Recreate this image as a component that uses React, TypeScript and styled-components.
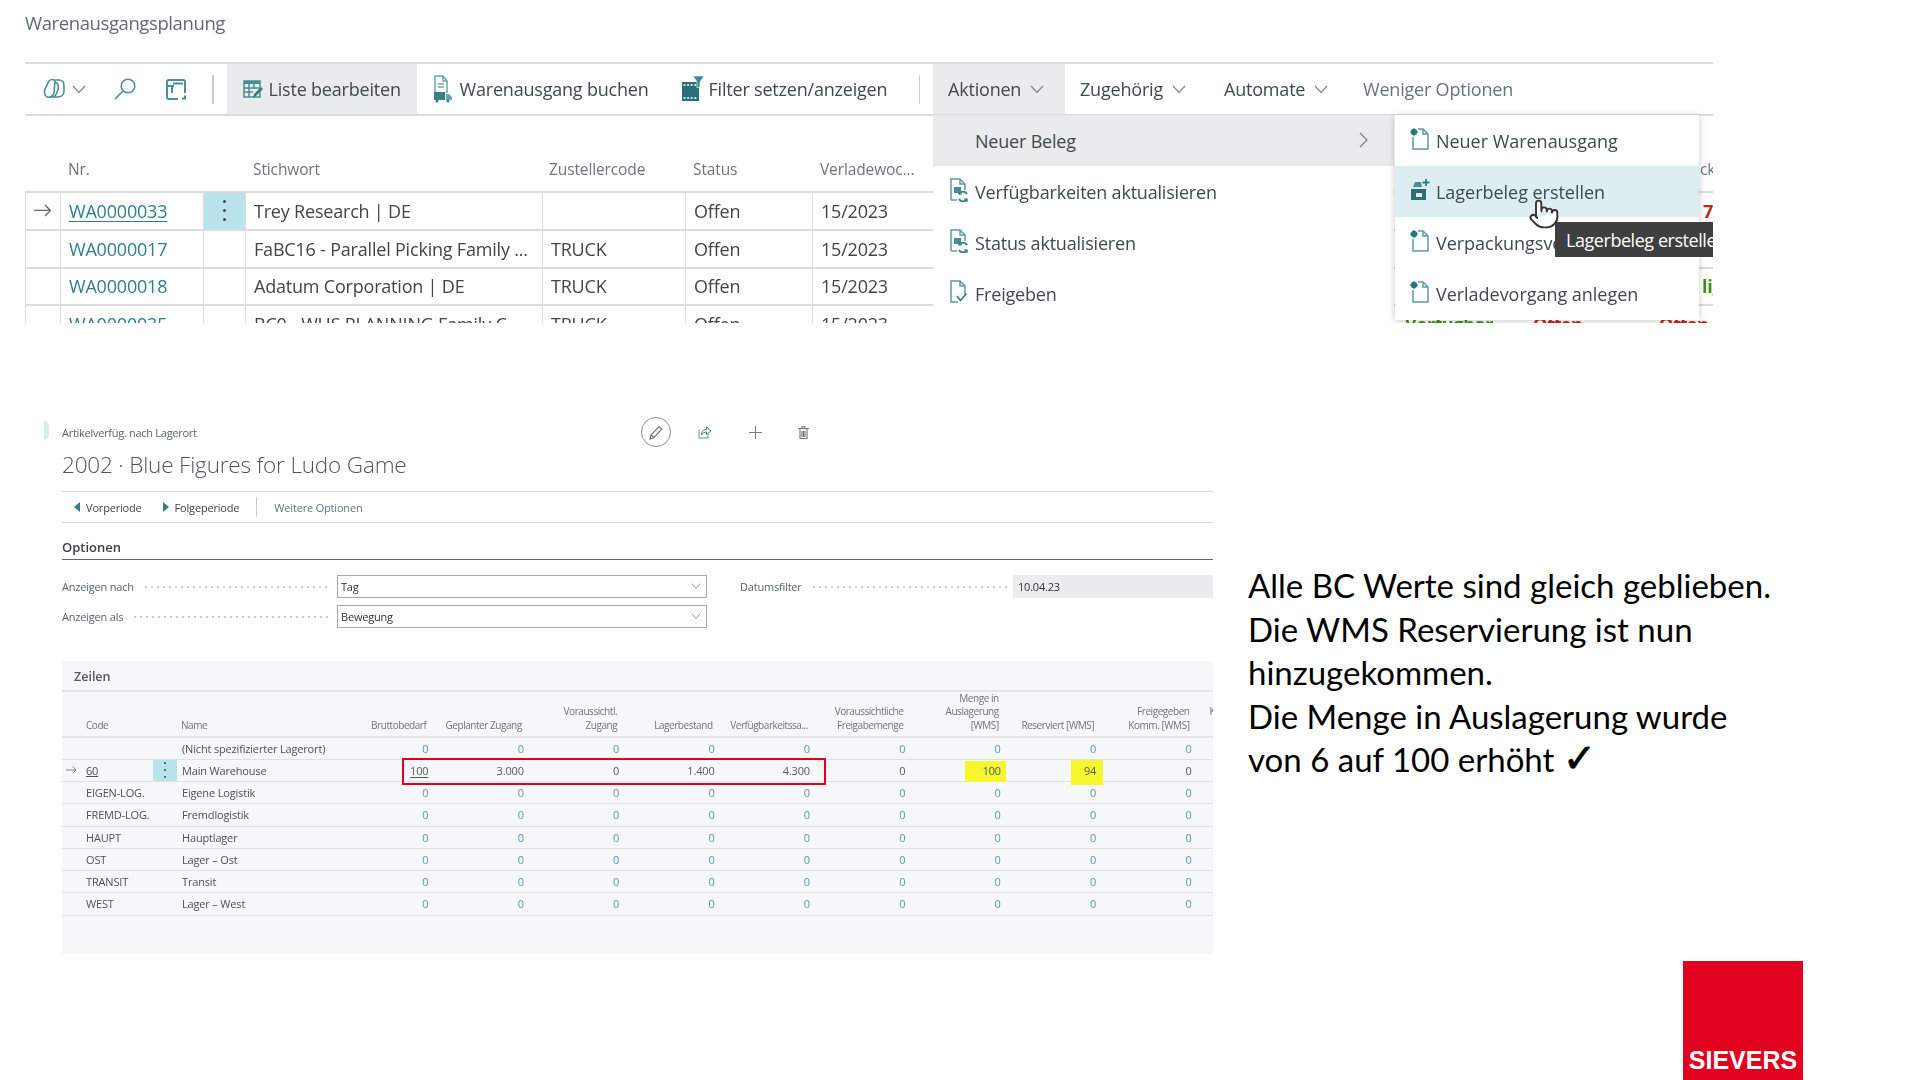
import React from 'react';
import styled, { createGlobalStyle } from 'styled-components';
import { Pointer } from 'lucide-react';

const TEAL = '#2f7f86';
const UI = '"Open Sans", "Noto Sans", sans-serif';

const Global = createGlobalStyle`
  html, body { margin: 0; padding: 0; background: #fff; }
  * { box-sizing: border-box; }
`;

const Slide = styled.div`
  width: 1920px; height: 1080px; overflow: hidden; background: #fff;
  font-family: ${UI}; color: #444;
`;

/* ---------- top screenshot ---------- */
const TopShot = styled.section`
  position: relative; margin-left: 25px; width: 1688px; height: 323px; overflow: hidden;
  filter: blur(0.35px);
`;
const PageTitle = styled.h1`
  margin: 0; height: 62px; padding-top: 9px; font-size: 18.5px; line-height: 28px; font-weight: 400;
  color: #5f6b70; letter-spacing: -0.4px;
`;
const Toolbar = styled.div`
  display: flex; height: 54px; border-top: 2px solid #dcdcdf; border-bottom: 2px solid #dcdcdf;
`;
const IconCluster = styled.div`
  width: 187px; padding-left: 18px; display: flex; align-items: center; color: ${TEAL};
  svg { flex: none; }
`;
const Gap = styled.span<{ $w: number }>`
  flex: none; width: ${p => p.$w}px;
`;
const ToolSep = styled.div<{ $l?: number; $r?: number }>`
  flex: none; width: 1.5px; height: 29px; align-self: center; background: #c9cbce;
  margin-left: ${p => p.$l ?? 0}px; margin-right: ${p => p.$r ?? 0}px;
`;
const ToolButton = styled.div<{ $w: number; $on?: boolean; $g?: number; $muted?: boolean }>`
  flex: none; width: ${p => p.$w}px; padding-left: 16px; display: flex; align-items: center;
  gap: ${p => p.$g ?? 6}px; font-size: 18px; letter-spacing: -0.2px; white-space: nowrap;
  color: ${p => (p.$muted ? '#66757a' : '#3f4a4e')};
  background: ${p => (p.$on ? '#eaebec' : 'transparent')};
`;
const MenuButton = styled(ToolButton)`
  padding-left: 15px; gap: 9px;
`;

const TopTable = styled.div``;
const topCols = '35px 143px 42px 297px 143px 127px 121px 471px 128px 126px 55px';
const TopHead = styled.div`
  display: grid; grid-template-columns: ${topCols}; height: 77px; align-items: end;
  border-bottom: 2px solid #dcdcdf; padding-bottom: 10px; font-size: 15.5px; color: #6b767a;
  letter-spacing: -0.12px;
`;
const HeadCell = styled.div<{ $pad?: number }>`
  padding-left: ${p => p.$pad ?? 8}px; white-space: nowrap; overflow: hidden; line-height: 24px;
`;
const TopRow = styled.div`
  display: grid; grid-template-columns: ${topCols}; height: 38px;
  border-bottom: 2px solid #dcdcdf; border-left: 1.5px solid #dcdcdf; margin-top: -0.2px;
  font-size: 18px; letter-spacing: -0.2px; color: #444;
`;
const TopCell = styled.div<{ $pad?: number; $active?: boolean; $plain?: boolean; $color?: string; $bold?: boolean }>`
  display: flex; align-items: center; padding-left: ${p => p.$pad ?? 8}px; white-space: nowrap; overflow: hidden;
  border-right: ${p => (p.$plain ? 'none' : '1.5px solid #dcdcdf')};
  background: ${p => (p.$active ? '#b9e4ec' : 'transparent')};
  color: ${p => p.$color ?? 'inherit'}; font-weight: ${p => (p.$bold ? 700 : 400)};
`;
const RowLink = styled.a<{ $current?: boolean }>`
  color: ${TEAL}; text-decoration: ${p => (p.$current ? 'underline' : 'none')}; text-underline-offset: 3px;
`;
const Dots = styled.span<{ $size?: number }>`
  display: flex; flex-direction: column; align-items: center; gap: ${p => (p.$size ?? 3) + 3}px; width: 100%;
  i { display: block; width: ${p => p.$size ?? 3}px; height: ${p => p.$size ?? 3}px; border-radius: 50%; background: #445; }
`;

const DropMenu = styled.div`
  position: absolute; left: 908px; top: 115px; width: 461px; height: 208px; background: #fff;
`;
const SubMenu = styled.div`
  position: absolute; left: 1370px; top: 115px; width: 304px; height: 205px; background: #fff;
  box-shadow: 0 1px 7px rgba(0, 0, 0, 0.22);
`;
const MenuRow = styled.div<{ $tone?: string }>`
  position: relative; height: 51px; display: flex; align-items: center; padding-left: 16px; gap: 6px;
  background: ${p => p.$tone ?? 'transparent'}; font-size: 18px; letter-spacing: -0.2px; color: #3f4a4e; white-space: nowrap;
`;
const SubRow = styled(MenuRow)`
  padding-left: 15px; letter-spacing: -0.03px;
`;
const MenuIconSlot = styled.span`
  flex: none; width: 20px; height: 24px; display: flex; align-items: center; justify-content: center; margin-top: -3px;
`;
const SubChevron = styled.span`
  position: absolute; right: 24px; top: 14px; height: 22px; color: #777;
`;
const Tooltip = styled.div`
  position: absolute; left: 1530px; top: 222px; width: 190px; height: 35px; background: #3f3f3f; color: #fff;
  padding-left: 11px; display: flex; align-items: center; font-size: 18px; letter-spacing: -0.45px; white-space: nowrap;
`;
const Hand = styled.span`
  position: absolute; left: 1503px; top: 198px; width: 32px; height: 36px; color: #333;
  svg { fill: #fff; }
`;

/* ---------- lower area ---------- */
const LowerRow = styled.div`
  display: flex; margin-top: 94px; height: 536px; margin-left: 44px;
`;
const Sliver = styled.div`
  flex: none; width: 5px; height: 19px; margin-top: 4px; margin-right: 13px;
  border-radius: 0 6px 6px 0; background: #d6eef2;
`;
const Card = styled.section`
  flex: none; width: 1151px; filter: blur(0.3px);
`;
const CardTop = styled.div`
  display: flex; align-items: center; height: 30px;
`;
const Crumb = styled.div`
  flex: none; width: 579px; font-size: 11px; letter-spacing: -0.28px; color: #5b6468; padding-top: 1px;
`;
const CardIcons = styled.div`
  display: flex; align-items: center; color: #6d7478;
`;
const EditRing = styled.span`
  width: 30px; height: 30px; border-radius: 50%; border: 1.5px solid #8a8f93; display: flex; align-items: center; justify-content: center;
`;
const CardTitle = styled.h2`
  margin: 0; height: 44px; padding-top: 3px; font-size: 22.5px; line-height: 30px; font-weight: 300; color: #4f5659; letter-spacing: -0.17px;
`;
const CardBar = styled.div`
  display: flex; align-items: center; height: 32px; border-top: 1.5px solid #dcdcdf; border-bottom: 1.5px solid #dcdcdf;
  font-size: 11px; letter-spacing: -0.18px; color: #444;
`;
const BarBtn = styled.span<{ $l: number; $muted?: boolean }>`
  display: flex; align-items: center; gap: 6px; margin-left: ${p => p.$l}px; white-space: nowrap;
  color: ${p => (p.$muted ? '#66757a' : 'inherit')};
`;
const BarSep = styled.span`
  width: 1px; height: 20px; background: #c9cbce; margin-left: 17px;
`;
const Triangle = styled.i<{ $left?: boolean }>`
  display: block; width: 0; height: 0; border-top: 5px solid transparent; border-bottom: 5px solid transparent;
  ${p => (p.$left ? `border-right: 6px solid ${TEAL};` : `border-left: 6px solid ${TEAL};`)}
`;
const SectionHead = styled.h3`
  margin: 0; height: 37px; padding-top: 15px; font-size: 13px; line-height: 18px; font-weight: 600; color: #3b4245;
  border-bottom: 1.5px solid #5a6670; letter-spacing: 0;
`;
const FieldGrid = styled.div`
  display: grid; grid-template-columns: 645px 33px 273px 200px; grid-auto-rows: 23px; row-gap: 7px; margin-top: 15px;
  font-size: 11px; letter-spacing: -0.2px;
`;
const LabelInput = styled.div`
  display: flex; grid-column: 1; height: 23px;
`;
const FieldName = styled.div<{ $w: number; $col?: number }>`
  grid-column: ${p => p.$col ?? 'auto'}; flex: none; width: ${p => p.$w}px; padding-right: 6px; display: flex; align-items: center; gap: 9px; color: #59636a; white-space: nowrap;
`;
const Leader = styled.span`
  flex: 1; height: 2px;
  background-image: radial-gradient(circle, #c4c8cb 0.7px, transparent 0.9px);
  background-size: 6px 2px; background-repeat: repeat-x;
`;
const SelectBox = styled.div`
  flex: none; width: 370px; height: 23px; border: 1.5px solid #a3a9af; padding: 0 5px 0 3px;
  display: flex; align-items: center; justify-content: space-between; color: #333;
`;
const ReadOnly = styled.div`
  grid-column: 4; background: #ebecee; display: flex; align-items: center; padding-left: 5px; color: #333;
`;

const Lines = styled.div`
  height: 293px; margin-top: 33px; background: #f6f7f9; position: relative; overflow: hidden;
`;
const LinesTitle = styled.div`
  height: 31px; border-bottom: 2px solid #e4e5e7; padding: 7px 0 0 12px; font-size: 12.5px; line-height: 18px; font-weight: 600; color: #50585c;
`;
const lineCols = '18px 73px 24px 161px repeat(9, 95.4px) 17px';
const LinesHead = styled.div`
  display: grid; grid-template-columns: ${lineCols}; height: 45.5px; align-items: end; border-bottom: 2px solid #e4e5e7;
  font-size: 10px; line-height: 13.4px; letter-spacing: -0.45px; color: #6c757a; padding-bottom: 6px;
`;
const LH = styled.div<{ $left?: boolean; $pad?: number }>`
  text-align: ${p => (p.$left ? 'left' : 'right')}; padding-right: ${p => (p.$left ? 0 : 7)}px; padding-left: ${p => p.$pad ?? 0}px; white-space: nowrap;
`;
const LRow = styled.div`
  position: relative; display: grid; grid-template-columns: ${lineCols}; height: 22.25px; border-bottom: 1.5px solid #dfe0e3;
  font-size: 11px; letter-spacing: -0.17px; align-items: center; color: #4b5256;
`;
const LCell = styled.div<{ $pad?: number }>`
  padding-left: ${p => p.$pad ?? 0}px; white-space: nowrap; display: flex; align-items: center; height: 100%;
`;
const ActionCell = styled(LCell)`
  background: #b9e4ec; justify-content: center;
`;
const Num = styled.div<{ $zero?: boolean; $link?: boolean }>`
  position: relative; text-align: right; padding-right: 5px; white-space: nowrap;
  color: ${p => (p.$zero ? '#5c9aa5' : '#555c60')};
  text-decoration: ${p => (p.$link ? 'underline' : 'none')}; text-underline-offset: 2px;
  span { position: relative; }
`;
const Mark = styled.i<{ $top: number; $h: number; $w: number; $right: number }>`
  position: absolute; background: #f5f62e;
  top: ${p => p.$top}px; height: ${p => p.$h}px; width: ${p => p.$w}px; right: ${p => p.$right}px;
`;
const RedBox = styled.div`
  position: absolute; left: 340px; top: -2px; width: 424px; height: 27px; border: 2px solid #e2001f; z-index: 2;
`;

const Note = styled.div`
  flex: none; margin: 147px 0 0 35px; font-family: Lato, "Open Sans", sans-serif; font-size: 33px; line-height: 43.6px; color: #000; white-space: nowrap;
`;
const NoteLine = styled.div``;
const CheckGlyph = styled.span`
  font-family: "DejaVu Sans", sans-serif; font-weight: 700; font-size: 40px; line-height: 0; -webkit-text-stroke: 0.8px #000;
`;

const Logo = styled.div`
  margin: 8px 0 0 1683px; width: 120px; height: 119px; background: #e2001f; color: #fff;
  display: flex; align-items: flex-end; justify-content: center; padding-bottom: 5px;
  font-family: "Liberation Sans", Arial, sans-serif; font-weight: 700; font-size: 25px; line-height: 30px; letter-spacing: 0;
`;

/* ---------- icons ---------- */
const Svg = styled.svg`
  flex: none; display: block;
`;
const Chevron = ({ c = '#7c8589', w = 14 }: { c?: string; w?: number }) => (
  <Svg width={w} height={w * 0.64} viewBox="0 0 14 9" fill="none" stroke={c} strokeWidth="1.2"><path d="M1 1l6 6.5L13 1" /></Svg>
);
const OfficeIcon = () => (
  <Svg width="22" height="24" viewBox="0 0 22 24" fill="none" stroke="#4a8e96" strokeWidth="1.6">
    <path d="M6 4c2-2 5-2 6 0l-1 12c-1 3-4 5-7 4-3-2-3-5-2-8z" />
    <path d="M12 3h4c4 0 5 3 5 6v5c0 4-3 6-6 6H7" />
    <path d="M12 5c3 1 4 4 3 8-1 3-2 5-4 7" />
  </Svg>
);
const SearchIcon = () => (
  <Svg width="22" height="22" viewBox="0 0 22 22" fill="none" stroke="#4a8e96" strokeWidth="1.6">
    <circle cx="14" cy="8" r="6.8" /><path d="M9 13L1 21" />
  </Svg>
);
const ColumnsIcon = () => (
  <Svg width="20" height="21" viewBox="0 0 20 21" fill="none" stroke="#4a8e96" strokeWidth="2">
    <path d="M19 14V3a2 2 0 0 0-2-2H3a2 2 0 0 0-2 2v15a2 2 0 0 0 2 2h9" />
    <path d="M1 7h7M6 7v7" />
    <rect x="7" y="3.5" width="10" height="2" fill="#4a8e96" stroke="none" />
    <path d="M6 17h.1M16 19.5h3v-3" />
  </Svg>
);
const ListEditIcon = () => (
  <Svg width="20" height="22" viewBox="0 0 20 22" fill="none" stroke="#4a8e96" strokeWidth="1.5">
    <rect x="1" y="3" width="16" height="16" />
    <path d="M1 4.5h16" strokeWidth="3" />
    <path d="M1 10h15M1 14h9M6 3v16M11 3v8" />
    <path d="M10 20l1-4 7-7 2 2-7 7z" fill={TEAL} stroke="none" />
  </Svg>
);
const PostIcon = () => (
  <Svg width="20" height="28" viewBox="0 0 20 28" fill="none" stroke="#6aa6ae" strokeWidth="1.5">
    <path d="M2 19V1h8l4 5v12" /><path d="M10 1v5h4M5 9h6M5 12h6" />
    <rect x="1" y="17" width="11" height="8" fill="#3a8089" stroke="none" />
    <path d="M13 19h3l3 3v3h-6z" fill="#6aa6ae" stroke="none" />
    <circle cx="4" cy="26" r="1.5" fill={TEAL} stroke="none" /><circle cx="15" cy="26" r="1.5" fill={TEAL} stroke="none" />
  </Svg>
);
const FilterIcon = () => (
  <Svg width="22" height="26" viewBox="0 0 22 26" fill="none">
    <rect x="0" y="6" width="17" height="19" fill="#2a6f78" />
    <path d="M1.5 9h14M1.5 22h14" stroke="#fff" strokeWidth="1.4" strokeDasharray="2 1.6" />
    <path d="M11 0h11l-4 6v5l-3 1V6z" fill="#3a8a93" stroke="#fff" strokeWidth=".6" />
  </Svg>
);
const DocRefreshIcon = () => (
  <Svg width="20" height="24" viewBox="0 0 20 24" fill="none" stroke="#5c9ba4" strokeWidth="1.5">
    <path d="M2 22V1h9l5 5v6" /><path d="M11 1v5h5M2 22h6" />
    <rect x="5" y="9" width="7" height="6" fill="#4a8e96" stroke="none" />
    <path d="M10 21a4.5 4.5 0 0 0 8 0M18 16a4.5 4.5 0 0 0-8 0" strokeWidth="1.7" stroke={TEAL} />
    <path d="M10 13v3h3M18 24v-3h-3" strokeWidth="1.2" stroke={TEAL} />
  </Svg>
);
const DocCheckIcon = () => (
  <Svg width="20" height="24" viewBox="0 0 20 24" fill="none" stroke="#5c9ba4" strokeWidth="1.5">
    <path d="M9 22H2V1h9l5 5v9" /><path d="M11 1v5h5" />
    <path d="M8 16l3.5 4.5 6-7" strokeWidth="1.6" stroke={TEAL} />
  </Svg>
);
const DocNewIcon = () => (
  <Svg width="20" height="22" viewBox="0 0 20 22" fill="none" stroke="#5c9ba4" strokeWidth="1.5">
    <path d="M3 9v12h15V6l-5-5H8" /><path d="M13 1v5h5" />
    <circle cx="4" cy="4" r="3.2" fill={TEAL} stroke="none" />
    <path d="M4 0v8M0 4h8" stroke="#2a6f78" strokeWidth="1" />
  </Svg>
);
const WarehouseDocIcon = () => (
  <Svg width="20" height="22" viewBox="0 0 20 22" fill="none">
    <path d="M1 10h15v11H1z" fill="#2a6f75" /><path d="M6 14h6v4H6z" fill="#dceef1" />
    <path d="M3 8l2-5h6l1 5z" fill="#4a8e96" /><path d="M16 0v7M12.5 3.5h7" stroke={TEAL} strokeWidth="1.8" />
  </Svg>
);
const PencilIcon = () => (
  <Svg width="15" height="15" viewBox="0 0 15 15" fill="none" stroke="#6d7478" strokeWidth="1.1">
    <path d="M1 14l1-4 8-8.5 3 2.5-8 8.5zM2 10l3 2.5" />
  </Svg>
);
const ShareIcon = () => (
  <Svg width="14" height="14" viewBox="0 0 14 14" fill="none" stroke={TEAL} strokeWidth="1">
    <path d="M1 5v8h9V9" opacity=".8" /><path d="M3.5 10c0-4 2.5-5.5 5-5.5V2L13 6 8.5 9.5V7C6.5 7 4.5 8 3.5 10z" />
  </Svg>
);
const PlusIcon = () => (
  <Svg width="13" height="13" viewBox="0 0 13 13" stroke="#757b7f" strokeWidth="1.1"><path d="M6.5 0v13M0 6.5h13" /></Svg>
);
const TrashIcon = () => (
  <Svg width="11" height="13" viewBox="0 0 11 13" fill="none" stroke="#6d7478" strokeWidth="1.1">
    <path d="M2 3v9.5h7V3M0 2.5h11M4 2.5V.7h3v1.8M4 5v6M5.5 5v6M7 5v6" />
  </Svg>
);
const ArrowIcon = ({ s = 18 }: { s?: number }) => (
  <Svg width={s} height={s * 0.72} viewBox="0 0 18 13" fill="none" stroke="#667" strokeWidth="1.3"><path d="M0 6.5h16.5M11 1l5.5 5.5L11 12" /></Svg>
);

/* ---------- data ---------- */
type TopRowData = { no: string; text: string; code: string; current?: boolean; extra?: React.ReactNode };
const topRows: TopRowData[] = [
  { no: 'WA0000033', text: 'Trey Research | DE', code: '', current: true,
    extra: <><TopCell $plain /><TopCell $plain /><TopCell $plain /><TopCell $plain $pad={44} $color="#c0281e" $bold>7</TopCell></> },
  { no: 'WA0000017', text: 'FaBC16 - Parallel Picking Family ...', code: 'TRUCK' },
  { no: 'WA0000018', text: 'Adatum Corporation | DE', code: 'TRUCK',
    extra: <><TopCell $plain /><TopCell $plain /><TopCell $plain /><TopCell $plain $pad={43} $color="#3f8f14" $bold>lig</TopCell></> },
  { no: 'WA0000035', text: 'BC0 - WHS PLANNING Family C...', code: 'TRUCK',
    extra: <><TopCell $plain /><TopCell $plain $pad={0} $color="#3f8f14" $bold>Verfügbar</TopCell><TopCell $plain $pad={0} $color="#c0281e" $bold>Offen</TopCell><TopCell $plain $pad={0} $color="#c0281e" $bold>Offen</TopCell></> },
];
const lowerRows = [
  { code: '', name: '(Nicht spezifizierter Lagerort)' },
  { code: '60', name: 'Main Warehouse', current: true },
  { code: 'EIGEN-LOG.', name: 'Eigene Logistik' },
  { code: 'FREMD-LOG.', name: 'Fremdlogistik' },
  { code: 'HAUPT', name: 'Hauptlager' },
  { code: 'OST', name: 'Lager – Ost' },
  { code: 'TRANSIT', name: 'Transit' },
  { code: 'WEST', name: 'Lager – West' },
];
const mainValues = ['100', '3.000', '0', '1.400', '4.300', '0', '100', '94', '0'];
const heads: React.ReactNode[] = [
  'Bruttobedarf', 'Geplanter Zugang', <>Voraussichtl.<br />Zugang</>, 'Lagerbestand', 'Verfügbarkeitssa...',
  <>Voraussichtliche<br />Freigabemenge</>, <>Menge in<br />Auslagerung<br />[WMS]</>, 'Reserviert [WMS]', <>Freigegeben<br />Komm. [WMS]</>,
];

export default function App() {
  return (
    <Slide>
      <Global />
      <TopShot>
        <PageTitle>Warenausgangsplanung</PageTitle>
        <Toolbar>
          <IconCluster>
            <OfficeIcon /><Gap $w={7} /><Chevron /><Gap $w={28} /><SearchIcon /><Gap $w={30} /><ColumnsIcon />
          </IconCluster>
          <ToolSep $r={13} />
          <ToolButton $w={190} $on><ListEditIcon />Liste bearbeiten</ToolButton>
          <ToolButton $w={249} $g={7}><PostIcon />Warenausgang buchen</ToolButton>
          <ToolButton $w={239} $g={5}><FilterIcon />Filter setzen/anzeigen</ToolButton>
          <ToolSep $l={14} $r={13} />
          <MenuButton $w={132} $on>Aktionen<Chevron /></MenuButton>
          <MenuButton $w={144}>Zugehörig<Chevron /></MenuButton>
          <MenuButton $w={139}>Automate<Chevron /></MenuButton>
          <MenuButton $w={190} $muted>Weniger Optionen</MenuButton>
        </Toolbar>
        <TopTable>
          <TopHead>
            <span />
            <HeadCell>Nr.</HeadCell>
            <span />
            <HeadCell>Stichwort</HeadCell>
            <HeadCell $pad={7}>Zustellercode</HeadCell>
            <HeadCell>Status</HeadCell>
            <HeadCell>Verladewoc...</HeadCell>
            <span /><span /><span />
            <HeadCell $pad={42}>ck</HeadCell>
          </TopHead>
          {topRows.map(r => (
            <TopRow key={r.no}>
              <TopCell $pad={8}>{r.current && <ArrowIcon />}</TopCell>
              <TopCell><RowLink $current={r.current}>{r.no}</RowLink></TopCell>
              <TopCell $pad={0} $active={r.current}>{r.current && <Dots><i /><i /><i /></Dots>}</TopCell>
              <TopCell>{r.text}</TopCell>
              <TopCell>{r.code}</TopCell>
              <TopCell>Offen</TopCell>
              <TopCell>15/2023</TopCell>
              {r.extra}
            </TopRow>
          ))}
        </TopTable>
        <DropMenu>
          <MenuRow $tone="#eaebec"><MenuIconSlot />Neuer Beleg
            <SubChevron><Svg width="12" height="22" viewBox="0 0 12 22" fill="none" stroke="#7c8589" strokeWidth="1.3"><path d="M2 4l7 7-7 7" /></Svg></SubChevron>
          </MenuRow>
          <MenuRow><MenuIconSlot><DocRefreshIcon /></MenuIconSlot>Verfügbarkeiten aktualisieren</MenuRow>
          <MenuRow><MenuIconSlot><DocRefreshIcon /></MenuIconSlot>Status aktualisieren</MenuRow>
          <MenuRow><MenuIconSlot><DocCheckIcon /></MenuIconSlot>Freigeben</MenuRow>
        </DropMenu>
        <SubMenu>
          <SubRow><MenuIconSlot><DocNewIcon /></MenuIconSlot>Neuer Warenausgang</SubRow>
          <SubRow $tone="#dceef1"><MenuIconSlot><WarehouseDocIcon /></MenuIconSlot>Lagerbeleg erstellen</SubRow>
          <SubRow><MenuIconSlot><DocNewIcon /></MenuIconSlot>Verpackungsvorgang</SubRow>
          <SubRow><MenuIconSlot><DocNewIcon /></MenuIconSlot>Verladevorgang anlegen</SubRow>
        </SubMenu>
        <Tooltip>Lagerbeleg erstellen</Tooltip>
        <Hand><Pointer size={32} strokeWidth={1.4} /></Hand>
      </TopShot>

      <LowerRow>
        <Sliver />
        <Card>
          <CardTop>
            <Crumb>Artikelverfüg. nach Lagerort</Crumb>
            <CardIcons>
              <EditRing><PencilIcon /></EditRing>
              <Gap $w={27} /><ShareIcon /><Gap $w={37} /><PlusIcon /><Gap $w={36} /><TrashIcon />
            </CardIcons>
          </CardTop>
          <CardTitle>2002 · Blue Figures for Ludo Game</CardTitle>
          <CardBar>
            <BarBtn $l={12}><Triangle $left />Vorperiode</BarBtn>
            <BarBtn $l={21}><Triangle />Folgeperiode</BarBtn>
            <BarSep />
            <BarBtn $l={17} $muted>Weitere Optionen</BarBtn>
          </CardBar>
          <SectionHead>Optionen</SectionHead>
          <FieldGrid>
            <LabelInput>
              <FieldName $w={275}>Anzeigen nach<Leader /></FieldName>
              <SelectBox>Tag<Chevron w={10} /></SelectBox>
            </LabelInput>
            <FieldName $w={273} $col={3}>Datumsfilter<Leader /></FieldName>
            <ReadOnly>10.04.23</ReadOnly>
            <LabelInput>
              <FieldName $w={275}>Anzeigen als<Leader /></FieldName>
              <SelectBox>Bewegung<Chevron w={10} /></SelectBox>
            </LabelInput>
          </FieldGrid>
          <Lines>
            <LinesTitle>Zeilen</LinesTitle>
            <LinesHead>
              <span />
              <LH $left $pad={6}>Code</LH>
              <span />
              <LH $left $pad={4}>Name</LH>
              {heads.map((h, i) => <LH key={i}>{h}</LH>)}
              <LH $left $pad={13}>K<br />&nbsp;</LH>
            </LinesHead>
            {lowerRows.map(r => (
              <LRow key={r.name}>
                <LCell $pad={4}>{r.current && <ArrowIcon s={11} />}</LCell>
                <LCell $pad={6}>{r.current ? <u>{r.code}</u> : r.code}</LCell>
                {r.current ? <ActionCell><Dots $size={2}><i /><i /><i /></Dots></ActionCell> : <LCell />}
                <LCell $pad={5}>{r.name}</LCell>
                {mainValues.map((v, i) =>
                  r.current ? (
                    <Num key={i} $link={i === 0}>
                      {i === 6 && <Mark $top={-2} $h={21} $w={41} $right={0} />}
                      {i === 7 && <Mark $top={-3} $h={25} $w={32} $right={-2} />}
                      <span>{v}</span>
                    </Num>
                  ) : <Num key={i} $zero><span>0</span></Num>
                )}
                <span />
                {r.current && <RedBox />}
              </LRow>
            ))}
          </Lines>
        </Card>
        <Note>
          <NoteLine>Alle BC Werte sind gleich geblieben.</NoteLine>
          <NoteLine>Die WMS Reservierung ist nun</NoteLine>
          <NoteLine>hinzugekommen.</NoteLine>
          <NoteLine>Die Menge in Auslagerung wurde</NoteLine>
          <NoteLine>von 6 auf 100 erhöht <CheckGlyph>✓</CheckGlyph></NoteLine>
        </Note>
      </LowerRow>
      <Logo>SIEVERS</Logo>
    </Slide>
  );
}
